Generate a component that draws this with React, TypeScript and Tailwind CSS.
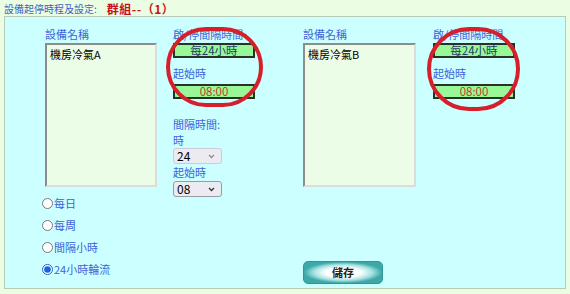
import type { ReactNode } from 'react';

function Label({ children }: { children: ReactNode }) {
  return <div className="h-[14px] leading-[14px] text-[#3f62d8] whitespace-nowrap">{children}</div>;
}

function GreenBox({ children, red }: { children: ReactNode; red?: boolean }) {
  return (
    <div
      className={`h-[15px] border-2 border-[#263326] bg-[#98f898] flex items-center justify-center leading-none text-[11.5px] ${
        red ? 'text-[#cc3a1a]' : 'text-[#1a3c6e]'
      }`}
    >
      {children}
    </div>
  );
}

function Select({ value, dim }: { value: string; dim?: boolean }) {
  return (
    <div
      className={`w-[49px] h-4 rounded-[3px] border bg-[#ebebf1] flex items-center justify-between pl-[3px] pr-[6px] text-[12px] leading-none text-black ${
        dim ? 'border-[#c9ccd6]' : 'border-[#9a9aa6]'
      }`}
    >
      <span>{value}</span>
      <svg width="7" height="5" viewBox="0 0 7 5">
        <path d="M1 1l2.5 2.5L6 1" fill="none" stroke={dim ? '#8c8c96' : '#333'} strokeWidth="1.3" />
      </svg>
    </div>
  );
}

function ListBox({ item }: { item: string }) {
  return (
    <div className="h-[144px] border-2 border-t-[#8c8c8c] border-l-[#8c8c8c] border-r-[#dcdcdc] border-b-[#dcdcdc] bg-[#ebfde6] pl-[3px] pt-[2px] text-black leading-[14px]">
      {item}
    </div>
  );
}

function Radio({ label, checked }: { label: string; checked?: boolean }) {
  return (
    <label className="h-[22px] flex items-center gap-[1px] text-[#3f62d8] whitespace-nowrap">
      <input
        type="radio"
        name="mode"
        defaultChecked={checked}
        className="m-0 w-[11px] h-[11px] accent-[#1a64d6]"
      />
      {label}
    </label>
  );
}

function Settings() {
  return (
    <div className="w-[82px] flex flex-col">
      <Label>啟/停間隔時間</Label>
      <div className="mt-[2px]">
        <GreenBox>每24小時</GreenBox>
      </div>
      <div className="mt-[8px]">
        <Label>起始時</Label>
      </div>
      <div className="mt-[4px]">
        <GreenBox red>08:00</GreenBox>
      </div>
    </div>
  );
}

export default function App() {
  return (
    <div className="min-h-[294px] bg-[#ebfde3] font-['Noto_Sans_CJK_TC','Noto_Sans',sans-serif] text-[11px]">
      <div className="h-4 pt-[2px] flex items-center pl-1 gap-[10px] leading-[14px]">
        <span className="text-[#3b63c4] text-[10px]">設備起停時程及設定:</span>
        <span className="text-[#cc1111] font-bold text-[12px] tracking-[0.5px]">群組--（1）</span>
      </div>

      <div className="relative mx-1 h-[273px] border border-[#b9cbb6] bg-[#ccffff] pl-10 pt-[10px]">
        <div className="grid grid-cols-[258px_1fr]">
          {/* group A */}
          <div className="flex gap-4">
            <div className="w-[112px] flex flex-col">
              <Label>設備名稱</Label>
              <div className="mt-[2px]">
                <ListBox item="機房冷氣A" />
              </div>
              <div className="mt-[5px] -ml-[3px] flex flex-col">
                <Radio label="每日" />
                <Radio label="每周" />
                <Radio label="間隔小時" />
                <Radio label="24小時輪流" checked />
              </div>
            </div>
            <div className="flex flex-col">
              <Settings />
              <div className="mt-[18px]">
                <Label>間隔時間:</Label>
              </div>
              <div className="mt-[2px]">
                <Label>時</Label>
              </div>
              <div className="mt-[1px]">
                <Select value="24" dim />
              </div>
              <div className="mt-[1px]">
                <Label>起始時</Label>
              </div>
              <div className="mt-[2px]">
                <Select value="08" />
              </div>
            </div>
          </div>

          {/* group B */}
          <div className="flex gap-[17px]">
            <div className="w-[113px] flex flex-col">
              <Label>設備名稱</Label>
              <div className="mt-[2px]">
                <ListBox item="機房冷氣B" />
              </div>
              <button className="mt-[74px] w-[80px] h-[23px] rounded-[5px] border border-[#2f9595] bg-[radial-gradient(ellipse_closest-side,#ffffff_45%,#a6e2e2_75%,#3ea8a8_100%)] font-bold text-[#222] text-[11px] leading-none">
                儲存
              </button>
            </div>
            <Settings />
          </div>
        </div>

        {/* red annotation circles */}
        <div className="absolute left-[161px] top-[10px] w-[97px] h-[80px] rounded-full border-4 border-[#d61f2a]" />
        <div className="absolute left-[422px] top-[10px] w-[93px] h-[84px] rounded-full border-4 border-[#d61f2a]" />
      </div>
    </div>
  );
}
